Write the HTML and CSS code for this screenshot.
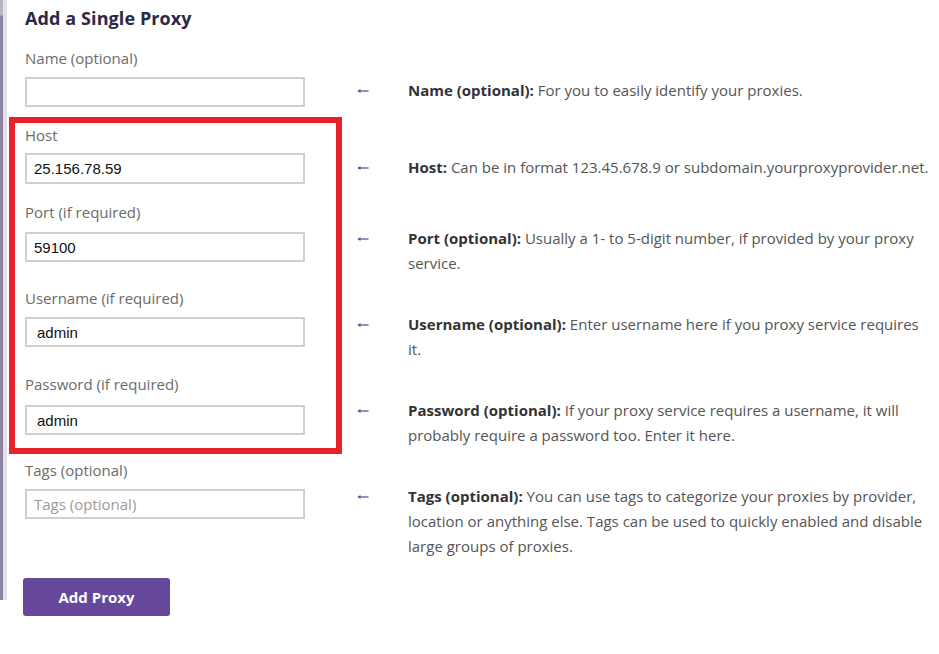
FILE: index.html
```html
<!DOCTYPE html>
<html lang="en">
<head>
<meta charset="utf-8">
<title>Add a Single Proxy</title>
<link rel="stylesheet" href="styles.css">
</head>
<body>
<div class="page">
  <div class="edge"><div class="edge-dark"></div><div class="edge-light"></div></div>
  <div class="form-col">
    <h1 class="title">Add a Single Proxy</h1>
    <div class="field field-first">
      <label class="label">Name (optional)</label>
      <input class="input" type="text" value="">
    </div>
    <div class="highlight">
      <div class="field field-host">
        <label class="label label-tight">Host</label>
        <input class="input input-tall" type="text" value="25.156.78.59">
      </div>
      <div class="field field-port">
        <label class="label label-wide">Port (if required)</label>
        <input class="input" type="text" value="59100">
      </div>
      <div class="field field-user">
        <label class="label">Username (if required)</label>
        <input class="input input-indent" type="text" value="admin">
      </div>
      <div class="field field-pass">
        <label class="label label-wider">Password (if required)</label>
        <input class="input input-indent" type="text" value="admin">
      </div>
    </div>
    <div class="field field-tags">
      <label class="label">Tags (optional)</label>
      <input class="input input-placeholder" type="text" placeholder="Tags (optional)">
    </div>
    <button class="btn" type="button">Add Proxy</button>
  </div>
  <div class="help-col">
    <div class="help help-name">
      <span class="arrow"><svg width="12" height="6" viewBox="0 0 12 6"><path d="M1 3H11.5" stroke="#6a4c9c" stroke-width="1.3"/><path d="M0.5 3L3.5 1V5Z" fill="#6a4c9c"/></svg></span>
      <p class="help-text"><b>Name (optional):</b> For you to easily identify your proxies.</p>
    </div>
    <div class="help help-host">
      <span class="arrow"><svg width="12" height="6" viewBox="0 0 12 6"><path d="M1 3H11.5" stroke="#6a4c9c" stroke-width="1.3"/><path d="M0.5 3L3.5 1V5Z" fill="#6a4c9c"/></svg></span>
      <p class="help-text"><b>Host:</b> Can be in format 123.45.678.9 or subdomain.yourproxyprovider.net.</p>
    </div>
    <div class="help help-port">
      <span class="arrow"><svg width="12" height="6" viewBox="0 0 12 6"><path d="M1 3H11.5" stroke="#6a4c9c" stroke-width="1.3"/><path d="M0.5 3L3.5 1V5Z" fill="#6a4c9c"/></svg></span>
      <p class="help-text"><b>Port (optional):</b> Usually a 1- to 5-digit number, if provided by your proxy service.</p>
    </div>
    <div class="help help-rest">
      <span class="arrow"><svg width="12" height="6" viewBox="0 0 12 6"><path d="M1 3H11.5" stroke="#6a4c9c" stroke-width="1.3"/><path d="M0.5 3L3.5 1V5Z" fill="#6a4c9c"/></svg></span>
      <p class="help-text"><b>Username (optional):</b> Enter username here if you proxy service requires it.</p>
    </div>
    <div class="help help-rest">
      <span class="arrow"><svg width="12" height="6" viewBox="0 0 12 6"><path d="M1 3H11.5" stroke="#6a4c9c" stroke-width="1.3"/><path d="M0.5 3L3.5 1V5Z" fill="#6a4c9c"/></svg></span>
      <p class="help-text"><b>Password (optional):</b> If your proxy service requires a username, it will probably require a password too. Enter it here.</p>
    </div>
    <div class="help help-rest">
      <span class="arrow"><svg width="12" height="6" viewBox="0 0 12 6"><path d="M1 3H11.5" stroke="#6a4c9c" stroke-width="1.3"/><path d="M0.5 3L3.5 1V5Z" fill="#6a4c9c"/></svg></span>
      <p class="help-text"><b>Tags (optional):</b> You can use tags to categorize your proxies by provider, location or anything else. Tags can be used to quickly enabled and disable large groups of proxies.</p>
    </div>
  </div>
</div>
</body>
</html>
```

FILE: styles.css
```css
html, body {
  margin: 0;
  padding: 0;
  background: #ffffff;
}

body {
  font-family: "Open Sans", "Noto Sans", sans-serif;
  width: 939px;
  height: 654px;
  overflow: hidden;
}

.page {
  display: flex;
  align-items: flex-start;
}

.edge {
  display: flex;
  height: 600px;
  flex: 0 0 7px;
}

.edge-dark {
  width: 3px;
  background: linear-gradient(#b9b2c6 0, #b9b2c6 15px, #8c82a0 16px, #8c82a0 100%);
}

.edge-light {
  width: 4px;
  background: #e3e1e7;
}

.form-col {
  display: flex;
  flex-direction: column;
  padding-left: 18px;
  flex: 0 0 330px;
}

.title {
  margin: 6px 0 0 0;
  font-size: 18px;
  line-height: 24px;
  font-weight: 700;
  color: #2c2943;
  letter-spacing: 0.1px;
}

.field {
  display: flex;
  flex-direction: column;
}

.field-first {
  margin-top: 18px;
}

.field-host {
  margin-top: 2px;
}

.field-port {
  margin-top: 18px;
}

.field-user {
  margin-top: 26px;
}

.field-pass {
  margin-top: 27px;
}

.field-tags {
  margin-top: 6px;
}

.label {
  font-size: 15px;
  line-height: 20px;
  color: #6b6b6b;
  margin-bottom: 9px;
}

.label-tight {
  margin-bottom: 8px;
}

.label-wide {
  margin-bottom: 10px;
}

.label-wider {
  margin-bottom: 11px;
}

.input {
  box-sizing: border-box;
  width: 280px;
  height: 30px;
  margin: 0;
  border: 2px solid #d0d0d0;
  border-radius: 0;
  padding: 0 0 0 7px;
  font-family: "Liberation Sans", Arial, sans-serif;
  font-size: 15px;
  color: #111111;
  background: #ffffff;
  outline: none;
}

.input-tall {
  height: 31px;
}

.input-indent {
  padding-left: 10px;
}

.input-placeholder::placeholder {
  font-family: "Open Sans", "Noto Sans", sans-serif;
  color: #9a9a9a;
  font-size: 15px;
}

.highlight {
  margin-top: 10px;
  margin-left: -16px;
  width: 333px;
  box-sizing: border-box;
  border: 6px solid #e8202b;
  padding: 0 0 13px 10px;
}

.btn {
  margin-top: 59px;
  margin-left: -2px;
  width: 147px;
  height: 38px;
  border: none;
  border-radius: 3px;
  background: #65479b;
  color: #ffffff;
  font-family: "Open Sans", "Noto Sans", sans-serif;
  font-size: 15px;
  font-weight: 700;
  padding: 0;
}

.help-col {
  display: flex;
  flex-direction: column;
  padding-left: 2px;
}

.help {
  display: flex;
  align-items: flex-start;
}

.help-name {
  margin-top: 78px;
}

.help-host {
  margin-top: 52px;
}

.help-port {
  margin-top: 46px;
}

.help-rest {
  margin-top: 36px;
}

.arrow {
  flex: 0 0 51px;
  height: 25px;
  display: flex;
  align-items: center;
}

.arrow svg {
  display: block;
}

.help-text {
  margin: 0;
  width: 522px;
  font-size: 15px;
  line-height: 25px;
  color: #555555;
}

.help-text b {
  color: #333333;
  font-weight: 700;
}
```
